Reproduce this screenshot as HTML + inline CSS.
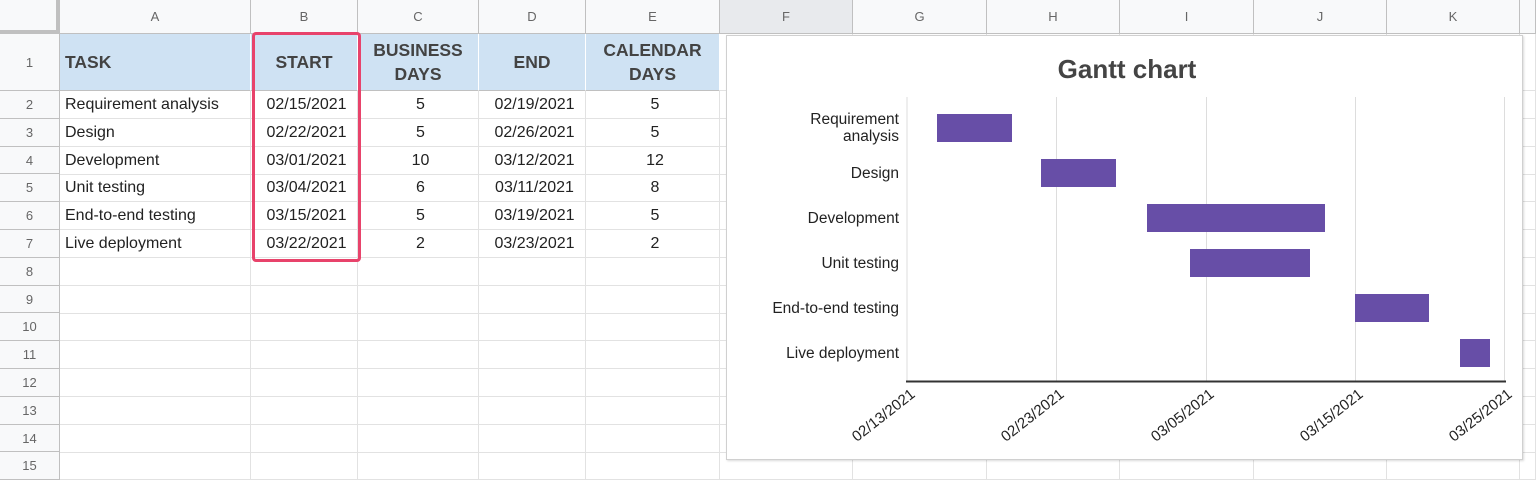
<!DOCTYPE html><html><head><style>
body{margin:0;width:1536px;height:472px;overflow:hidden;background:#fff;font-family:"Liberation Sans",Arial,sans-serif;position:relative}
.a{position:absolute;box-sizing:border-box}
.ch{top:0;height:34px;background:#f8f9fa;border-right:1px solid #c0c0c0;border-bottom:1px solid #c0c0c0;color:#666;font-size:13px;text-align:center;line-height:34px}
.rh{left:0;width:60px;background:#f8f9fa;border-right:1px solid #c0c0c0;border-bottom:1px solid #c0c0c0;color:#666;font-size:13px;text-align:center}
.c{border-right:1px solid #e2e2e2;border-bottom:1px solid #e2e2e2;font-size:16px;color:#222;white-space:nowrap;overflow:hidden}
.h{background:#cfe2f3;font-weight:bold;font-size:17.5px;color:#434343;text-align:center;display:flex;align-items:center;justify-content:center;line-height:24px;border-right:1px solid #fff;border-bottom:1px solid #c0c0c0}
</style></head><body>
<div id="g"></div>
<script>
var cols=[60,251,358,479,586,720,853,987,1120,1254,1387,1520,1536];
var L=["A","B","C","D","E","F","G","H","I","J","K",""];
var h='';
h+='<div class="a" style="left:0;top:0;width:60px;height:34px;background:#f8f9fa;border-right:4px solid #c0c0c0;border-bottom:4px solid #c0c0c0"></div>';
for(var i=0;i<12;i++){h+='<div class="a ch" style="left:'+cols[i]+'px;width:'+(cols[i+1]-cols[i])+'px'+(i==5?';background:#e8eaed':'')+'">'+L[i]+'</div>';}
var rows=[34,91];for(var r=2;r<=16;r++)rows.push(91+(r-1)*27.8);
for(var r=0;r<15;r++){h+='<div class="a rh" style="top:'+rows[r]+'px;height:'+(rows[r+1]-rows[r])+'px;line-height:'+(rows[r+1]-rows[r])+'px">'+(r+1)+'</div>';}
var hd=["TASK","START","BUSINESS<br>DAYS","END","CALENDAR<br>DAYS"];
for(var i=0;i<5;i++){h+='<div class="a c h" style="left:'+cols[i]+'px;top:34px;width:'+(cols[i+1]-cols[i])+'px;height:57px;'+(i==0?'justify-content:flex-start;padding-left:5px':'')+'">'+hd[i]+'</div>';}
var d=[["Requirement analysis","02/15/2021","5","02/19/2021","5"],["Design","02/22/2021","5","02/26/2021","5"],["Development","03/01/2021","10","03/12/2021","12"],["Unit testing","03/04/2021","6","03/11/2021","8"],["End-to-end testing","03/15/2021","5","03/19/2021","5"],["Live deployment","03/22/2021","2","03/23/2021","2"]];
for(var r=1;r<15;r++){for(var i=0;i<12;i++){var t=(r<=6&&i<5)?d[r-1][i]:'';h+='<div class="a c" style="left:'+cols[i]+'px;top:'+rows[r]+'px;width:'+(cols[i+1]-cols[i])+'px;height:28px;line-height:28px;padding-left:5px;text-align:'+(i==0?'left':'center')+'">'+t+'</div>';}}
for(var i=5;i<12;i++){h+='<div class="a c" style="left:'+cols[i]+'px;top:34px;width:'+(cols[i+1]-cols[i])+'px;height:57px"></div>';}
h+='<div class="a" style="left:252px;top:32px;width:109px;height:230px;border:3px solid #e8436b;border-radius:4px"></div>';
document.getElementById('g').innerHTML=h;
</script>
<div class="a" style="left:726px;top:35px;width:797px;height:425px;background:#fff;border:1px solid #d0d0d0;box-shadow:1px 1px 2px rgba(0,0,0,.15)"></div>
<svg class="a" style="left:0;top:0" width="1536" height="472" font-family="Liberation Sans,Arial,sans-serif">
<text x="1127" y="78" text-anchor="middle" font-size="26" font-weight="bold" fill="#444">Gantt chart</text>
<g stroke="#ddd" stroke-width="1"><line x1="907" y1="97" x2="907" y2="381"/><line x1="1056.5" y1="97" x2="1056.5" y2="381"/><line x1="1206.5" y1="97" x2="1206.5" y2="381"/><line x1="1355.5" y1="97" x2="1355.5" y2="381"/><line x1="1504.5" y1="97" x2="1504.5" y2="381"/></g>
<line x1="906" y1="381.5" x2="1506" y2="381.5" stroke="#333" stroke-width="2"/>
<g fill="#674ea7"><rect x="937" y="114" width="75" height="28"/><rect x="1041" y="159" width="75" height="28"/><rect x="1147" y="204" width="178" height="28"/><rect x="1190" y="249" width="120" height="28"/><rect x="1355" y="294" width="74" height="28"/><rect x="1460" y="339" width="30" height="28"/></g>
<g font-size="15.5" fill="#222" text-anchor="end"><text x="899" y="124">Requirement</text><text x="899" y="141">analysis</text><text x="899" y="178">Design</text><text x="899" y="223">Development</text><text x="899" y="268">Unit testing</text><text x="899" y="313">End-to-end testing</text><text x="899" y="358">Live deployment</text></g>
<g font-size="15" fill="#222" text-anchor="end"><text transform="translate(916,396) rotate(-38)">02/13/2021</text><text transform="translate(1065,396) rotate(-38)">02/23/2021</text><text transform="translate(1215,396) rotate(-38)">03/05/2021</text><text transform="translate(1364,396) rotate(-38)">03/15/2021</text><text transform="translate(1513,396) rotate(-38)">03/25/2021</text></g>
</svg>
</body></html>
